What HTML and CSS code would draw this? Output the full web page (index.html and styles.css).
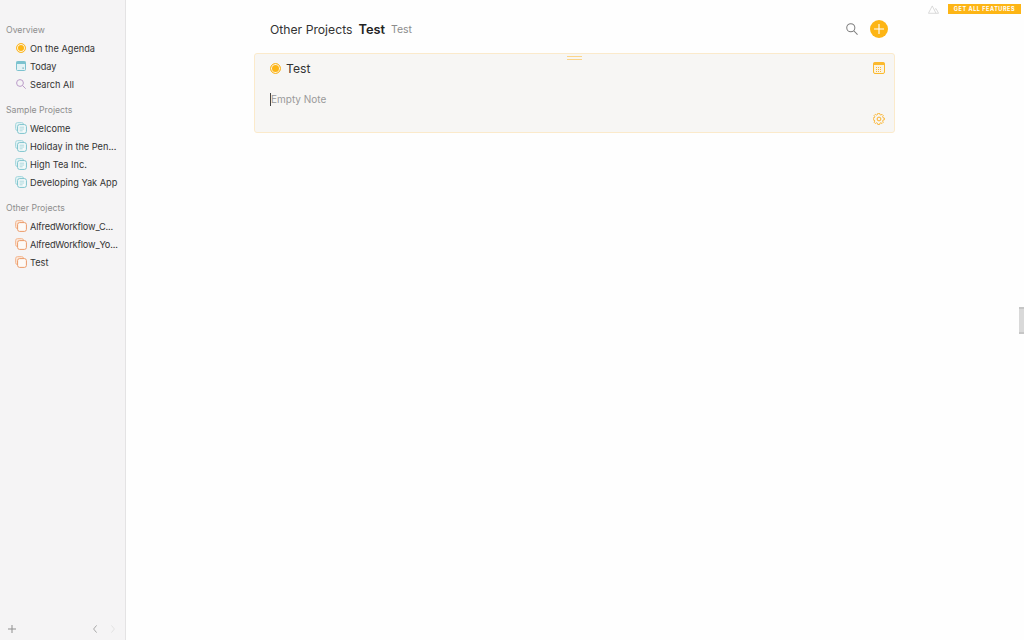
FILE: index.html
```html
<!DOCTYPE html>
<html>
<head>
    <meta charset="UTF-8">
    <title>Test</title>
    <link rel="stylesheet" href="styles.css">
</head>
<body>
    <svg class="icon-defs" width="0" height="0">
        <symbol id="folder-blue" viewBox="0 0 12 12">
            <rect x="0.6" y="0.6" width="8" height="8" rx="2" fill="#e4f3f5" stroke="#a3d6dc"/>
            <rect x="2.6" y="2.6" width="8.8" height="8.8" rx="2" fill="#f5fafa" stroke="#7cc2cc"/>
            <path d="M4.6 5.2h4.6M4.6 7h4.6M4.6 8.8h3" stroke="#9ad0d7" stroke-width="0.8" fill="none"/>
        </symbol>
        <symbol id="folder-orange" viewBox="0 0 12 12">
            <rect x="0.6" y="0.6" width="8" height="8" rx="2" fill="#fbe6d8" stroke="#f3b892"/>
            <rect x="2.6" y="2.6" width="8.8" height="8.8" rx="2" fill="#fdfaf7" stroke="#eb9a68"/>
        </symbol>
    </svg>

    <aside class="sidebar">
        <div class="side-nav">
            <h3 class="side-title">Overview</h3>
            <ul class="side-list">
                <li class="side-item">
                    <span class="agenda-dot agenda-dot-small"></span>
                    <span class="side-label">On the Agenda</span>
                </li>
                <li class="side-item">
                    <svg class="side-icon side-icon-small" viewBox="0 0 10 10">
                        <rect x="0.5" y="0.5" width="9" height="9" rx="1" fill="#e3f2f5" stroke="#7cc2cf"/>
                        <rect x="0.5" y="0.5" width="9" height="2.5" fill="#7cc2cf"/>
                        <rect x="6.5" y="6.5" width="1.2" height="1.2" fill="#5b9aa8"/>
                    </svg>
                    <span class="side-label">Today</span>
                </li>
                <li class="side-item">
                    <svg class="side-icon side-icon-small" viewBox="0 0 10 10" fill="none" stroke="#bb9cc9" stroke-width="1">
                        <circle cx="4" cy="4" r="3.4"/>
                        <path d="M6.5 6.5l3.2 3.2"/>
                    </svg>
                    <span class="side-label">Search All</span>
                </li>
            </ul>

            <h3 class="side-title">Sample Projects</h3>
            <ul class="side-list">
                <li class="side-item"><svg class="side-icon"><use href="#folder-blue"/></svg><span class="side-label">Welcome</span></li>
                <li class="side-item"><svg class="side-icon"><use href="#folder-blue"/></svg><span class="side-label">Holiday in the Pen...</span></li>
                <li class="side-item"><svg class="side-icon"><use href="#folder-blue"/></svg><span class="side-label">High Tea Inc.</span></li>
                <li class="side-item"><svg class="side-icon"><use href="#folder-blue"/></svg><span class="side-label">Developing Yak App</span></li>
            </ul>

            <h3 class="side-title">Other Projects</h3>
            <ul class="side-list">
                <li class="side-item"><svg class="side-icon"><use href="#folder-orange"/></svg><span class="side-label side-label-tight">AlfredWorkflow_C...</span></li>
                <li class="side-item"><svg class="side-icon"><use href="#folder-orange"/></svg><span class="side-label side-label-tight">AlfredWorkflow_Yo...</span></li>
                <li class="side-item"><svg class="side-icon"><use href="#folder-orange"/></svg><span class="side-label">Test</span></li>
            </ul>
        </div>

        <div class="side-footer">
            <svg class="footer-plus" viewBox="0 0 8 8" fill="none" stroke="#8f8f8f" stroke-width="1">
                <path d="M4 0v8M0 4h8"/>
            </svg>
            <div class="footer-arrows">
                <svg class="footer-arrow" viewBox="0 0 4 8" fill="none" stroke="#a8a8a8" stroke-width="1">
                    <path d="M3.6 0.4L0.6 4l3 3.6"/>
                </svg>
                <svg class="footer-arrow" viewBox="0 0 4 8" fill="none" stroke="#e2e2e2" stroke-width="1">
                    <path d="M0.4 0.4l3 3.6-3 3.6"/>
                </svg>
            </div>
        </div>
    </aside>

    <main class="main">
        <div class="content">
            <header class="page-header">
                <span class="crumb">Other Projects</span>
                <span class="crumb-current">Test</span>
                <span class="crumb-note">Test</span>
                <div class="header-actions">
                    <svg class="header-search" viewBox="0 0 13 13" fill="none" stroke="#7c7c7c" stroke-width="1.1">
                        <circle cx="5.2" cy="5.2" r="4.4"/>
                        <path d="M8.4 8.4l4.1 4.1"/>
                    </svg>
                    <button class="add-button">
                        <svg viewBox="0 0 10 10" fill="none" stroke="#fff" stroke-width="1.1">
                            <path d="M5 0v10M0 5h10"/>
                        </svg>
                    </button>
                </div>
            </header>

            <section class="card">
                <div class="card-handle"></div>
                <div class="card-top">
                    <span class="agenda-dot"></span>
                    <span class="card-title">Test</span>
                    <svg class="card-calendar" viewBox="0 0 12 12">
                        <rect x="0.5" y="0.5" width="11" height="11" rx="1.5" fill="#fbf3df" stroke="#fbb92e"/>
                        <rect x="0.5" y="0.5" width="11" height="2.5" fill="#fbb92e"/>
                        <path d="M3 5.5h6M3 7.5h6M3 9.5h6" stroke="#f9b63a" stroke-width="1" stroke-dasharray="1 1"/>
                    </svg>
                </div>
                <div class="card-note"><span class="caret"></span>Empty Note</div>
                <div class="card-bottom">
                    <svg class="card-gear" viewBox="0 0 12 12" fill="none" stroke="#fbb22a" stroke-width="1">
                        <circle cx="6" cy="6" r="1.9"/>
                        <path d="M5 0.6h2l0.3 1.5 1.1 0.5 1.3-0.8 1.4 1.4-0.8 1.3 0.5 1.1 1.5 0.3v2l-1.5 0.3-0.5 1.1 0.8 1.3-1.4 1.4-1.3-0.8-1.1 0.5-0.3 1.5h-2l-0.3-1.5-1.1-0.5-1.3 0.8-1.4-1.4 0.8-1.3-0.5-1.1-1.5-0.3v-2l1.5-0.3 0.5-1.1-0.8-1.3 1.4-1.4 1.3 0.8 1.1-0.5z" transform="translate(0.3 -0.3) scale(0.9)"/>
                    </svg>
                </div>
            </section>
        </div>
    </main>

    <div class="promo">
        <svg class="promo-icon" viewBox="0 0 13 10" fill="none" stroke="#cfcfcf" stroke-width="0.9">
            <path d="M0.5 9.5L5 0.8l4.5 8.7zM8 5.2l1.4-1.4 3.1 5.7H9.5"/>
        </svg>
        <span class="promo-button">GET ALL FEATURES</span>
    </div>
    <div class="scroll-handle"></div>
</body>
</html>
```

FILE: styles.css
```css
body {
    font-family: 'Inter', 'Liberation Sans', sans-serif;
    margin: 0;
    height: 640px;
    display: flex;
    overflow: hidden;
    background: #fefefe;
    color: #2b2b2b;
}
.icon-defs {
    position: absolute;
}
.sidebar {
    width: 126px;
    box-sizing: border-box;
    flex-shrink: 0;
    display: flex;
    flex-direction: column;
    justify-content: space-between;
    background: #f5f4f5;
    border-right: 1px solid #e4e3e4;
}
.side-nav {
    padding-top: 23px;
}
.side-title {
    margin: 0 0 2px 6px;
    font-size: 8.7px;
    line-height: 14px;
    font-weight: 400;
    color: #8e8e8e;
}
.side-list {
    list-style: none;
    margin: 0 0 10px;
    padding: 0;
}
.side-item {
    display: flex;
    align-items: center;
    height: 18px;
    padding-left: 15px;
}
.side-icon {
    width: 12px;
    height: 12px;
    flex-shrink: 0;
}
.side-icon-small {
    width: 10px;
    height: 10px;
    margin: 0 1px;
}
.side-label {
    margin-left: 3px;
    font-size: 9.2px;
    white-space: nowrap;
    color: #333;
}
.side-label-tight {
    letter-spacing: -0.15px;
}
.agenda-dot {
    width: 11px;
    height: 11px;
    box-sizing: border-box;
    flex-shrink: 0;
    border-radius: 50%;
    border: 1px solid #fbb92e;
    background: #fdb515;
    box-shadow: inset 0 0 0 1px #fdf6e6;
}
.agenda-dot-small {
    width: 10px;
    height: 10px;
    margin: 0 1px;
}
.side-footer {
    display: flex;
    align-items: center;
    justify-content: space-between;
    height: 23px;
    padding: 0 10px 0 8px;
}
.footer-plus {
    width: 8px;
    height: 8px;
}
.footer-arrows {
    display: flex;
    gap: 14px;
}
.footer-arrow {
    width: 4px;
    height: 8px;
}
.main {
    flex: 1;
}
.content {
    width: 641px;
    margin-left: 128px;
}
.page-header {
    height: 53px;
    padding: 5px 7px 0 16px;
    display: flex;
    align-items: center;
    box-sizing: border-box;
}
.crumb {
    font-size: 12.2px;
    color: #333;
}
.crumb-current {
    margin-left: 6px;
    font-size: 12.8px;
    font-weight: 600;
    color: #222;
}
.crumb-note {
    margin-left: 6px;
    font-size: 10.5px;
    color: #8c8c8c;
}
.header-actions {
    margin-left: auto;
    display: flex;
    align-items: center;
    gap: 11px;
}
.header-search {
    width: 12px;
    height: 12px;
    margin-right: 1px;
}
.add-button {
    width: 18px;
    height: 18px;
    padding: 0;
    border: none;
    border-radius: 50%;
    background: #fdb515;
    display: flex;
    align-items: center;
    justify-content: center;
}
.add-button svg {
    width: 10px;
    height: 10px;
}
.card {
    position: relative;
    height: 80px;
    box-sizing: border-box;
    padding: 6px 9px 0 15px;
    background: #f7f6f4;
    border: 1px solid #fbeacb;
    border-radius: 3px;
}
.card-handle {
    position: absolute;
    top: 2px;
    left: 312px;
    width: 15px;
    height: 4px;
    border-top: 1px solid #fbd58a;
    border-bottom: 1px solid #fbd58a;
    box-sizing: border-box;
}
.card-top {
    display: flex;
    align-items: center;
    height: 16px;
}
.card-title {
    margin-left: 5px;
    font-size: 12.2px;
    color: #333;
}
.card-calendar {
    margin-left: auto;
    width: 12px;
    height: 12px;
}
.card-note {
    margin-top: 16px;
    height: 14px;
    display: flex;
    align-items: center;
    font-size: 10px;
    color: #9a9a9a;
}
.caret {
    width: 1px;
    height: 13px;
    background: #444;
}
.card-bottom {
    margin-top: 7px;
    display: flex;
    justify-content: flex-end;
}
.card-gear {
    width: 12px;
    height: 12px;
}
.promo {
    position: absolute;
    top: 4px;
    right: 3px;
    display: flex;
    align-items: center;
    gap: 9px;
}
.promo-icon {
    width: 11px;
    height: 9px;
}
.promo-button {
    width: 73px;
    height: 10px;
    background: #fdb515;
    color: #fff;
    font-size: 5.5px;
    font-weight: 700;
    letter-spacing: 0.55px;
    line-height: 10px;
    text-align: center;
}
.scroll-handle {
    position: absolute;
    top: 307px;
    right: 0;
    width: 5px;
    height: 27px;
    background: #d9d9d9;
    border-top: 2px solid #c6c6c6;
    border-bottom: 2px solid #c6c6c6;
    box-sizing: border-box;
}
```
